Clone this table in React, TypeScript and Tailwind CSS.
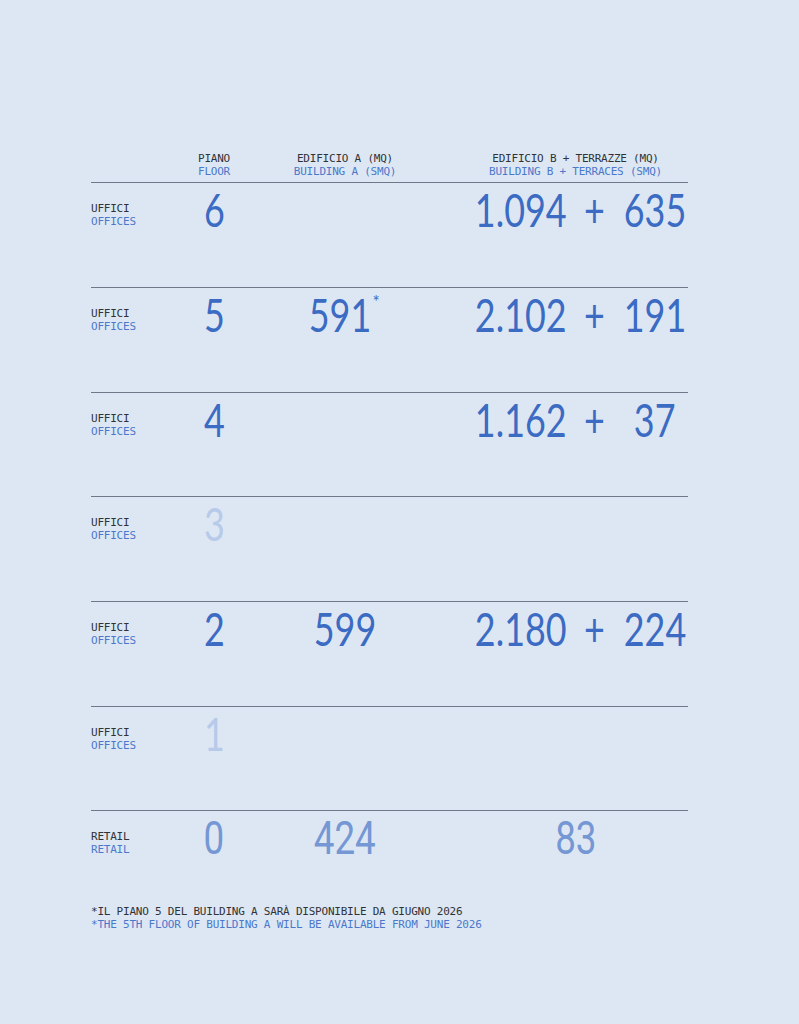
import React from 'react';

type Row = {
  it: string;
  en: string;
  floor: string;
  a?: string;
  star?: boolean;
  b?: string;
  t?: string;
  faded?: boolean;
  retail?: boolean;
  bOnly?: string;
};

const rows: Row[] = [
  { it: 'UFFICI', en: 'OFFICES', floor: '6', b: '1.094', t: '635' },
  { it: 'UFFICI', en: 'OFFICES', floor: '5', a: '591', star: true, b: '2.102', t: '191' },
  { it: 'UFFICI', en: 'OFFICES', floor: '4', b: '1.162', t: '37' },
  { it: 'UFFICI', en: 'OFFICES', floor: '3', faded: true },
  { it: 'UFFICI', en: 'OFFICES', floor: '2', a: '599', b: '2.180', t: '224' },
  { it: 'UFFICI', en: 'OFFICES', floor: '1', faded: true },
  { it: 'RETAIL', en: 'RETAIL', floor: '0', a: '424', bOnly: '83', retail: true },
];

const mono = "font-['DejaVu_Sans_Mono','Liberation_Mono',monospace] text-[11px] leading-[13px] tracking-[-0.02em]";
const num = "font-['Lato','Noto_Sans',sans-serif] text-[46px] leading-none whitespace-nowrap";
const blue = 'text-[#3b6bc3]';

function Label({ it, en }: { it: string; en: string }) {
  return (
    <div className={`${mono} w-[92px] mt-[19px]`}>
      <div className="text-[#2f3338]">{it}</div>
      <div className="text-[#4b78cb]">{en}</div>
    </div>
  );
}

// narrow digits: scaled Lato inside a flex box so the overflow stays anchored
function Big({ children, color = blue, end }: { children: React.ReactNode; color?: string; end?: boolean }) {
  return (
    <div className={`flex w-full ${end ? 'justify-end' : 'justify-center'}`}>
      <span className={`inline-block shrink-0 scale-x-[0.78] ${end ? 'origin-right' : 'origin-center'} ${num} ${color}`}>
        {children}
      </span>
    </div>
  );
}

function Retail({ children }: { children: React.ReactNode }) {
  return (
    <div className="flex w-full justify-center">
      <span className="inline-block shrink-0 scale-x-[0.8] font-['Roboto',sans-serif] text-[46px] leading-none whitespace-nowrap text-[#7597d3]">
        {children}
      </span>
    </div>
  );
}

export default function App() {
  return (
    <div className="min-h-[1024px] bg-[#dde7f3] pt-[152px]">
      <div className="ml-[91px] w-[597px]">
        <div className={`${mono} flex pb-[4px] border-b border-[#6f7888]`}>
          <div className="w-[92px]" />
          <div className="w-[62px] text-center">
            <div className="text-[#2f3338]">PIANO</div>
            <div className="text-[#4b78cb]">FLOOR</div>
          </div>
          <div className="w-[200px] text-center">
            <div className="text-[#2f3338]">EDIFICIO A (MQ)</div>
            <div className="text-[#4b78cb]">BUILDING A (SMQ)</div>
          </div>
          <div className="w-[18px]" />
          <div className="w-[225px] text-center">
            <div className="text-[#2f3338]">EDIFICIO B + TERRAZZE (MQ)</div>
            <div className="text-[#4b78cb]">BUILDING B + TERRACES (SMQ)</div>
          </div>
        </div>

        {rows.map((r, i) => (
          <div
            key={i}
            className={`flex items-start ${i > 0 ? 'border-t border-[#6f7888]' : ''} ${r.retail ? 'h-[84px]' : i === 0 ? 'h-[104px]' : 'h-[104.67px]'}`}
          >
            <Label it={r.it} en={r.en} />
            <div className="w-[62px] mt-[4px]">
              {r.retail ? (
                <Retail>{r.floor}</Retail>
              ) : (
                <Big color={r.faded ? 'text-[#b8caea]' : blue}>{r.floor}</Big>
              )}
            </div>
            <div className="w-[200px] mt-[4px] flex justify-center">
              {r.retail && r.a && <Retail>{r.a}</Retail>}
              {!r.retail && r.a && (
                <div className={`relative w-[60px] ${r.star ? 'mr-[9px]' : ''}`}>
                  <Big>{r.a}</Big>
                  {r.star && (
                    <span className={`absolute left-[62px] top-[1px] font-['Lato',sans-serif] text-[17px] leading-none ${blue}`}>
                      *
                    </span>
                  )}
                </div>
              )}
            </div>
            <div className="w-[18px]" />
            <div className="w-[225px] mt-[4px]">
              {r.b && (
                <div className="flex">
                  <div className="w-[104px]">
                    <Big end>{r.b}</Big>
                  </div>
                  <div className="w-[55px]">
                    <Big>+</Big>
                  </div>
                  <div className="w-[66px]">
                    <Big>{r.t}</Big>
                  </div>
                </div>
              )}
              {r.bOnly && <Retail>{r.bOnly}</Retail>}
            </div>
          </div>
        ))}

        <div className={`${mono} mt-[11px]`}>
          <div className="text-[#2f3338]">*IL PIANO 5 DEL BUILDING A SARÀ DISPONIBILE DA GIUGNO 2026</div>
          <div className="text-[#4b78cb]">*THE 5TH FLOOR OF BUILDING A WILL BE AVAILABLE FROM JUNE 2026</div>
        </div>
      </div>
    </div>
  );
}
